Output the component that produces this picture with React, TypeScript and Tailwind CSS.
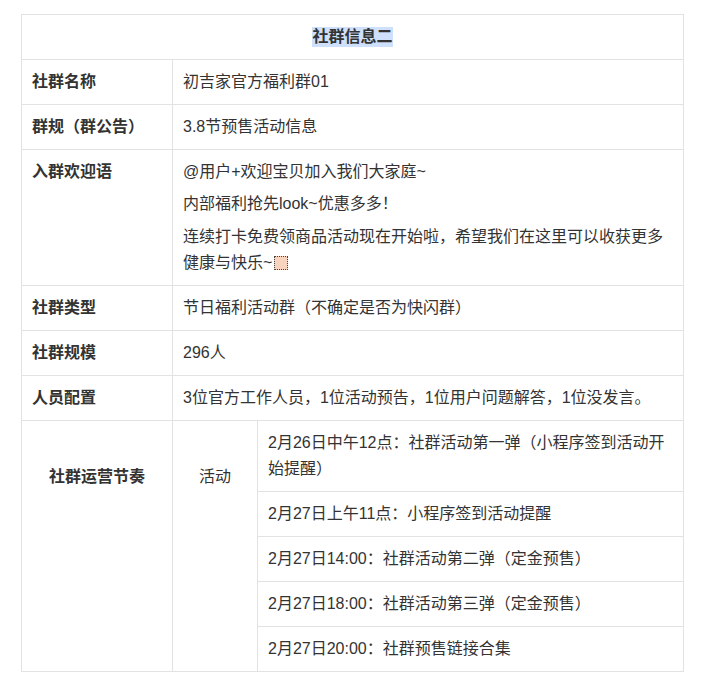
import React from "react";

const border = "border-[#e2e2e2]";

function Row({ label, children, last }: { label: string; children: React.ReactNode; last?: boolean }) {
  return (
    <div className={`flex ${last ? "" : "border-b"} ${border}`}>
      <div className={`w-[151px] shrink-0 border-r ${border} px-[10px] py-[9px] font-bold`}>{label}</div>
      <div className="flex-1 px-[10px] py-[9px]">{children}</div>
    </div>
  );
}

const schedule = [
  "2月26日中午12点：社群活动第一弹（小程序签到活动开始提醒）",
  "2月27日上午11点：小程序签到活动提醒",
  "2月27日14:00：社群活动第二弹（定金预售）",
  "2月27日18:00：社群活动第三弹（定金预售）",
  "2月27日20:00：社群预售链接合集",
];

export default function App() {
  return (
    <div
      className="min-h-[686px] bg-white pl-[21px] pt-[14px] text-[16px] leading-[26px] text-[#333]"
      style={{ fontFamily: '"Liberation Sans", "Noto Sans CJK SC", sans-serif' }}
    >
      <div className={`w-[663px] border ${border}`}>
        <div className={`flex h-[45px] items-center justify-center border-b ${border}`}>
          <span className="bg-[#cfe0fc] font-bold leading-[20px]">社群信息二</span>
        </div>
        <Row label="社群名称">初吉家官方福利群01</Row>
        <Row label="群规（群公告）">3.8节预售活动信息</Row>
        <Row label="入群欢迎语">
          <p>@用户+欢迎宝贝加入我们大家庭~</p>
          <p className="mt-[6px]">内部福利抢先look~优惠多多！</p>
          <p className="mt-[7px]">
            连续打卡免费领商品活动现在开始啦，希望我们在这里可以收获更多健康与快乐~
            <span className="ml-[2px] inline-block h-[14px] w-[14px] border border-dotted border-[#444] bg-[#f8d3be] align-[-2px]"></span>
          </p>
        </Row>
        <Row label="社群类型">节日福利活动群（不确定是否为快闪群）</Row>
        <Row label="社群规模">296人</Row>
        <Row label="人员配置">3位官方工作人员，1位活动预告，1位用户问题解答，1位没发言。</Row>
        <div className="flex">
          <div className={`w-[151px] shrink-0 border-r ${border}`}>
            <div className="flex h-[112px] items-center justify-center font-bold">社群运营节奏</div>
          </div>
          <div className={`w-[85px] shrink-0 border-r ${border}`}>
            <div className="flex h-[112px] items-center justify-center">活动</div>
          </div>
          <div className="flex-1">
            {schedule.map((s, i) => (
              <div
                key={i}
                className={`px-[10px] py-[9px] ${i < schedule.length - 1 ? `border-b ${border}` : ""}`}
              >
                {s}
              </div>
            ))}
          </div>
        </div>
      </div>
    </div>
  );
}
